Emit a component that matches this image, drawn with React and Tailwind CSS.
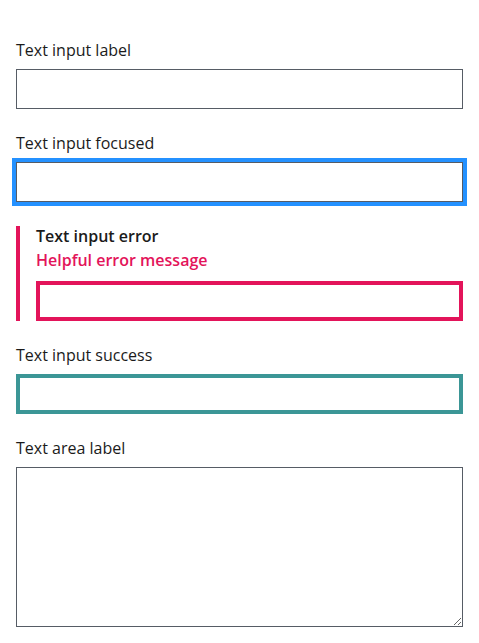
import React from 'react';

const font = { fontFamily: '"Open Sans", "Noto Sans", sans-serif' };

export default function App() {
  return (
    <div className="min-h-screen bg-white px-4 pt-4 text-[#1b1b1b]" style={font}>
      <form className="flex flex-col" onSubmit={e => e.preventDefault()}>
        <label htmlFor="input-1" className="mt-6 block text-base leading-[21px]">Text input label</label>
        <input id="input-1" type="text" className="mt-2 block h-10 w-full border border-[#565c65] bg-white px-2 outline-none" />

        <label htmlFor="input-2" className="mt-6 block text-base leading-[21px]">Text input focused</label>
        <input id="input-2" type="text" className="mt-2 block h-10 w-full border border-[#565c65] bg-white px-2 outline-4 outline-[#2491ff]" />

        <div className="mt-6 border-l-4 border-[#e3145a] pl-4">
          <label htmlFor="input-3" className="block text-base font-semibold leading-[21px]">Text input error</label>
          <span className="block pt-[3px] pb-[3px] text-base font-semibold leading-[20px] text-[#e3145a]">Helpful error message</span>
          <input id="input-3" type="text" className="mt-2 block h-10 w-full border-4 border-[#e3145a] bg-white px-2 outline-none" />
        </div>

        <label htmlFor="input-4" className="mt-6 block text-base leading-[21px]">Text input success</label>
        <input id="input-4" type="text" className="mt-2 block h-10 w-full border-4 border-[#3b9696] bg-white px-2 outline-none" />

        <label htmlFor="input-5" className="mt-6 block text-base leading-[21px]">Text area label</label>
        <textarea id="input-5" className="mt-2 block h-40 w-full border border-[#565c65] bg-white p-2 outline-none" />
      </form>
    </div>
  );
}
